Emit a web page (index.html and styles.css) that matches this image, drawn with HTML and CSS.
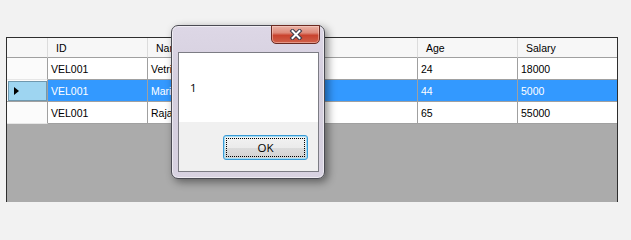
FILE: index.html
```html
<!DOCTYPE html>
<html>
<head>
<meta charset="utf-8">
<link rel="stylesheet" href="styles.css">
</head>
<body>
<div class="form">
  <div class="grid">
    <div class="corner"></div>
    <div class="colhead">ID</div>
    <div class="colhead">Name</div>
    <div class="colhead">Age</div>
    <div class="colhead last">Salary</div>

    <div class="rowhead"></div>
    <div class="cell">VEL001</div>
    <div class="cell">Vetri</div>
    <div class="cell">24</div>
    <div class="cell last">18000</div>

    <div class="rowhead current"><div class="sel-box"><span class="arrow"></span></div></div>
    <div class="cell sel">VEL001</div>
    <div class="cell sel">Mari</div>
    <div class="cell sel">44</div>
    <div class="cell sel last">5000</div>

    <div class="rowhead"></div>
    <div class="cell">VEL001</div>
    <div class="cell">Raja</div>
    <div class="cell">65</div>
    <div class="cell last">55000</div>
  </div>

  <div class="dialog">
    <div class="close">
      <svg width="14" height="11" viewBox="0 0 14 11">
        <path d="M3.5 2 L10.5 9 M10.5 2 L3.5 9" stroke="#3a3a4a" stroke-width="4" stroke-linecap="square" fill="none"/>
        <path d="M3.5 2 L10.5 9 M10.5 2 L3.5 9" stroke="#ffffff" stroke-width="2" stroke-linecap="square" fill="none"/>
      </svg>
    </div>
    <div class="client">
      <div class="msg">1</div>
      <div class="btnbar">
        <div class="okbtn"><div class="focus">OK</div></div>
      </div>
    </div>
  </div>
</div>
</body>
</html>
```

FILE: styles.css
```css
html, body {
  margin: 0;
  padding: 0;
  overflow: hidden;
}
body {
  background: #f2f2f2;
  font-family: "Liberation Sans", Arial, sans-serif;
}
.form {
  position: relative;
  width: 631px;
  height: 202px;
  padding: 37px 0 0 6px;
  box-sizing: border-box;
  overflow: hidden;
}
.grid {
  width: 612px;
  height: 165px;
  box-sizing: border-box;
  border: 1px solid #2e2e2e;
  border-bottom: none;
  background: #ababab;
  display: grid;
  grid-template-columns: 41px 100px 270px 100px 99px;
  grid-template-rows: 20px 22px 22px 22px;
  align-content: start;
  font-size: 10.5px;
  color: #000;
}
.corner {
  background: #f7f7f7;
  border-right: 1px solid #dcdcdc;
  border-bottom: 1px solid #a0a0a0;
}
.colhead {
  background: #f7f7f7;
  border-right: 1px solid #dcdcdc;
  border-bottom: 1px solid #a0a0a0;
  padding-left: 8px;
  display: flex;
  align-items: center;
}
.colhead.last {
  border-right: none;
}
.rowhead {
  background: #fbfbfb;
  border-right: 1px solid #a0a0a0;
  border-bottom: 1px solid #e6e6e6;
  box-sizing: border-box;
  display: flex;
}
.rowhead.current {
  padding: 1px 0 0 1px;
  border-bottom: 1px solid #a0a0a0;
}
.sel-box {
  flex: 1;
  background: #9ed5f1;
  border: 1px solid #6f98ae;
  display: flex;
  align-items: center;
  padding-left: 5px;
}
.arrow {
  width: 0;
  height: 0;
  border-top: 4px solid transparent;
  border-bottom: 4px solid transparent;
  border-left: 5px solid #000;
}
.cell {
  background: #fff;
  border-right: 1px solid #a0a0a0;
  border-bottom: 1px solid #a0a0a0;
  padding-left: 3px;
  display: flex;
  align-items: center;
}
.cell.last {
  border-right: none;
}
.cell.sel {
  background: #3399ff;
  color: #fff;
}

/* message box */
.dialog {
  position: absolute;
  left: 171px;
  top: 25px;
  width: 154px;
  height: 154px;
  box-sizing: border-box;
  border: 1px solid #4a4a52;
  border-radius: 7px;
  background: linear-gradient(#ddd7e6, #d4cedd 40%, #d8d2e1);
  box-shadow: inset 0 0 0 1px rgba(255,255,255,0.55), 3px 3px 9px rgba(0,0,0,0.45);
  padding: 26px 5px 6px 6px;
  display: flex;
}
.close {
  position: absolute;
  left: 99px;
  top: -1px;
  width: 49px;
  height: 19px;
  box-sizing: border-box;
  border: 1px solid #6a2a22;
  border-radius: 0 0 5px 5px;
  background: linear-gradient(#eab2a6, #de8a7a 40%, #c9432e 55%, #d0604a);
  box-shadow: inset 0 0 0 1px rgba(255,220,210,0.45);
  display: flex;
  align-items: center;
  justify-content: center;
}
.client {
  flex: 1;
  border: 1px solid #7c7c84;
  display: flex;
  flex-direction: column;
  font-family: "Open Sans", "Noto Sans", sans-serif;
  font-size: 11.5px;
  color: #000;
}
.msg {
  height: 69px;
  box-sizing: border-box;
  background: #fff;
  padding: 27px 0 0 11px;
  line-height: 16px;
}
.btnbar {
  flex: 1;
  background: #f0f0f0;
  display: flex;
  justify-content: flex-end;
  align-items: flex-start;
  padding: 13px 10px 0 0;
}
.okbtn {
  width: 85px;
  height: 25px;
  box-sizing: border-box;
  border: 1px solid #3a9ad6;
  border-radius: 3px;
  background: linear-gradient(#f2f2f2, #ebebeb 50%, #dcdcdc 51%, #d2d2d2);
  box-shadow: inset 0 0 0 1px #9fdcf5;
  padding: 2px;
  display: flex;
}
.focus {
  flex: 1;
  border: 1px dotted #000;
  display: flex;
  align-items: center;
  justify-content: center;
}
```
